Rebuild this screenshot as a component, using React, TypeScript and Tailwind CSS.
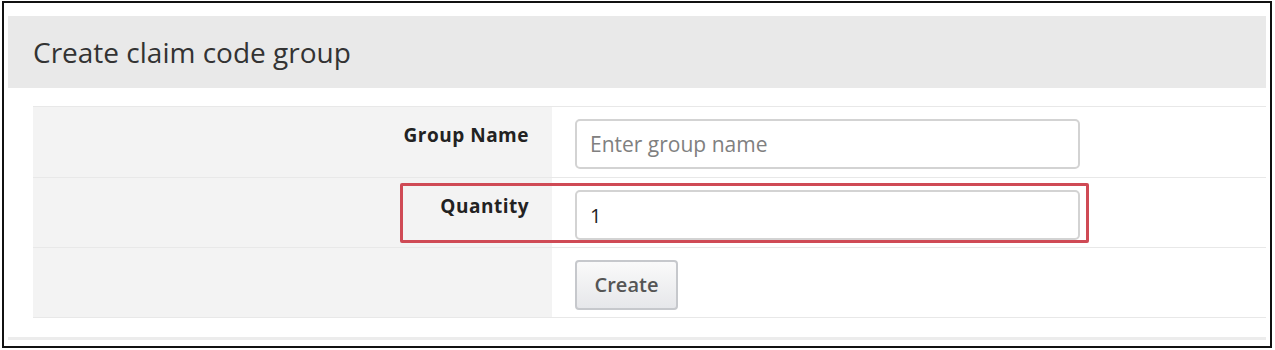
import React from 'react';

const font = { fontFamily: '"Open Sans", "Noto Sans", Arial, sans-serif' };

function FormRow({ label, children, tall, last }: { label?: string; children: React.ReactNode; tall?: boolean; last?: boolean }) {
  return (
    <div className={`flex border-t border-[#e8e8e8] ${tall ? 'h-[71px]' : 'h-[70px]'} ${last ? 'border-b' : ''}`}>
      <div className="w-[519px] shrink-0 bg-[#f3f3f3] pr-[23px] pt-[14px] text-right text-[19px] font-bold leading-[28px] tracking-[0.5px] text-[#222]">
        {label}
      </div>
      <div className="flex-1 bg-white pl-[23px] pt-[12px]">{children}</div>
    </div>
  );
}

export default function App() {
  return (
    <div className="h-[350px] w-[1275px] bg-white pl-[2px] pt-[1px]" style={font}>
      <div className="flex h-[347px] w-[1270px] flex-col border-2 border-[#111] px-[4px] pt-[13px]">
        {/* Header */}
        <div className="flex h-[72px] items-center bg-[#e9e9e9] pl-[25px]">
          <h1 className="text-[28px] font-normal text-[#333]">Create claim code group</h1>
        </div>

        {/* Form table */}
        <div className="relative ml-[25px] mt-[18px]">
          <FormRow label="Group Name" tall>
            <input
              placeholder="Enter group name"
              className="h-[50px] w-[505px] rounded-[5px] border-2 border-[#d3d3d3] px-[13px] text-[21px] text-[#333] placeholder:text-[#808080]"
            />
          </FormRow>
          <FormRow label="Quantity">
            <input
              defaultValue="1"
              className="h-[50px] w-[505px] rounded-[5px] border-2 border-[#d3d3d3] px-[13px] text-[20px] text-[#222]"
            />
          </FormRow>
          <FormRow tall last>
            <button className="h-[50px] w-[103px] rounded-[4px] border-2 border-[#c6c8cc] bg-gradient-to-b from-[#fafafa] to-[#e6e7ea] text-[20px] font-semibold text-[#555]">
              Create
            </button>
          </FormRow>

          {/* Highlight box */}
          <div className="pointer-events-none absolute left-[367px] top-[77px] h-[60px] w-[689px] rounded-[2px] border-[3px] border-[#cf4a55]" />
        </div>

        <div className="mt-[19px] h-[3px] bg-[#ececec]" />
      </div>
    </div>
  );
}
